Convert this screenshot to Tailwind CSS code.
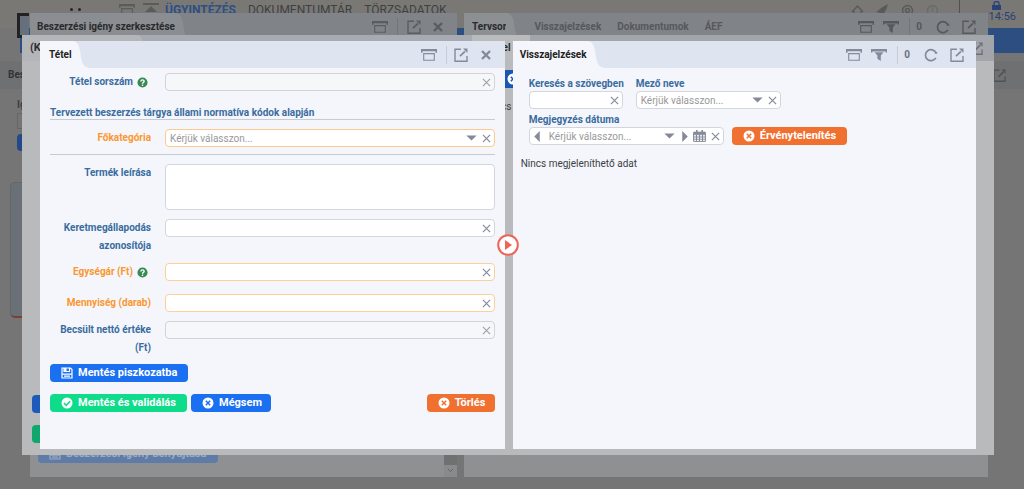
<!DOCTYPE html>
<html lang="hu">
<head>
<meta charset="utf-8">
<title>Tétel</title>
<script src="https://cdn.jsdelivr.net/npm/@tailwindcss/browser@4"></script>
</head>
<body class="relative h-screen overflow-hidden bg-[#757575] font-[Roboto,sans-serif] text-[10px] leading-[18px] text-[#3c3f44]">
<svg class="hidden">
  <symbol id="x" viewBox="0 0 10 10"><path d="M1 1l8 8M9 1l-8 8" fill="none" stroke="currentColor" stroke-width="1.3"/></symbol>
  <symbol id="xb" viewBox="0 0 10 10"><path d="M1 1l8 8M9 1l-8 8" fill="none" stroke="currentColor" stroke-width="2.4"/></symbol>
  <symbol id="box" viewBox="0 0 16 12"><path d="M0 0h16v3.800h-1.500v-1.500h-13v1.500H0z" fill="currentColor"/><path d="M2.700 4.600h10.600v6.700H2.700z" fill="none" stroke="currentColor" stroke-width="1.100"/></symbol>
  <symbol id="funnel" viewBox="0 0 16 12"><path d="M0 0h16v3.500h-1.400V2.500H1.400v1H0z" fill="currentColor"/><path d="M3.500 3.200h9L9.800 6.500V12L6.400 9.800V6.500z" fill="currentColor"/></symbol>
  <symbol id="ext" viewBox="0 0 14 14"><path d="M7 1.200H1v12h12V8" fill="none" stroke="currentColor" stroke-width="1.400"/><path d="M6 8.200L11 3.300" fill="none" stroke="currentColor" stroke-width="1.700"/><path d="M9 .5h4.500V5z" fill="currentColor"/></symbol>
  <symbol id="reload" viewBox="0 0 14 14"><path d="M11.800 9.800A5.500 5.500 0 1 1 12 5" fill="none" stroke="currentColor" stroke-width="1.700"/><path d="M10.400 5.800h2.800V3.200z" fill="currentColor"/></symbol>
  <symbol id="down" viewBox="0 0 12 7"><path d="M0 .5h12L6 6.500z" fill="currentColor"/></symbol>
  <symbol id="left" viewBox="0 0 6 12"><path d="M6 0v12L0 6z" fill="currentColor"/></symbol>
  <symbol id="right" viewBox="0 0 6 12"><path d="M0 0v12l6-6z" fill="currentColor"/></symbol>
  <symbol id="cal" viewBox="0 0 13 12"><path d="M.6 2.200h11.800v9.200H.6zM.6 4.700h11.800M.6 7h11.800M.6 9.200h11.800M3.500 4.700v6.700M6.500 4.700v6.700M9.500 4.700v6.700" fill="none" stroke="currentColor"/><path d="M1 2h11v2.200H1zM3 0h1.600v3H3zM8.400 0H10v3H8.400z" fill="currentColor"/></symbol>
  <symbol id="help" viewBox="0 0 12 12"><circle cx="6" cy="6" r="5.500" fill="#358a50"/><path d="M4.200 4.800c0-2.300 3.600-2.200 3.600-.2C7.800 5.900 6 5.800 6 7.300M6 8.300v1.400" fill="none" stroke="#fff" stroke-width="1.500"/></symbol>
  <symbol id="cx" viewBox="0 0 12 12"><circle cx="6" cy="6" r="5.500" fill="#fff"/><path d="M3.800 3.800l4.400 4.400M8.200 3.800L3.800 8.200" stroke="currentColor" stroke-width="1.500"/></symbol>
  <symbol id="ck" viewBox="0 0 12 12"><circle cx="6" cy="6" r="5.500" fill="#fff"/><path d="M3 6l2.200 2.300L9.200 4.200" fill="none" stroke="currentColor" stroke-width="1.600"/></symbol>
  <symbol id="save" viewBox="0 0 12 12"><path d="M1 1h8.500L11 2.500V11H1zM3 1v3.500h5.500V1M1 7.200h10M3 9.200h6" fill="none" stroke="currentColor" stroke-width="1.200"/><path d="M3.200 1h2.300v3H3.200z" fill="currentColor"/></symbol>
  <symbol id="tail" viewBox="0 0 18 27" preserveAspectRatio="none"><path d="M0 0C6 0 7.500 6 8.500 13C9.500 22 12 27 18 27H0z" fill="currentColor"/></symbol>
</svg>

<!-- application page -->
<div aria-hidden="true" class="absolute inset-0">
  <header class="flex h-7 items-start bg-[#797875] pl-[17px] text-[12px] leading-5 text-[#3f4042]">
    <div class="mt-[13px] h-[25px] w-3 border-y-[3px] border-l-[3px] border-[#222] bg-[#66707c]"></div>
    <div class="mt-2 ml-[41px] flex gap-[5px] text-[#262626]"><i class="size-[3px] rounded-full bg-current"></i><i class="size-[3px] rounded-full bg-current"></i></div>
    <svg class="mt-1 ml-[38px] h-3 w-4 text-[#5b5b5c]"><use href="#box"/></svg>
    <svg class="mt-[3px] ml-2 h-3 w-4 text-[#5b5b5c]" viewBox="0 0 16 12"><path d="M0 0h16v2H0zM8 3l6 6H2z" fill="currentColor"/></svg>
    <nav class="ml-[6px] flex gap-3"><a href="#" class="font-bold text-[#2c4f86]">ÜGYINTÉZÉS</a><a href="#">DOKUMENTUMTÁR</a><a href="#">TÖRZSADATOK</a></nav>
    <div class="mt-1 ml-auto flex gap-3 pr-5 text-[#59595a]">
      <svg class="size-[13px]" viewBox="0 0 13 13" fill="none" stroke="currentColor" stroke-width="1.300"><path d="M1 8l5.500-6L12 8M3 7v5h7V7"/></svg>
      <svg class="size-[13px]" viewBox="0 0 13 13"><path d="M12 0L5 4 3 6 0 8l3 .5L5 10l.5 2L8 9l2-3z" fill="currentColor"/></svg>
      <svg class="size-[13px]" viewBox="0 0 13 13" fill="none" stroke="currentColor" stroke-width="1.400"><circle cx="6.500" cy="6.500" r="5"/><circle cx="6.500" cy="6.500" r="2"/></svg>
      <svg class="size-[13px]" viewBox="0 0 13 13" fill="none" stroke="#6a6a6a" stroke-width="1.400"><circle cx="6.500" cy="6.500" r="5"/><path d="M6.500 3v5"/></svg>
    </div>
    <div class="flex w-[65px] flex-col items-end border-l border-[#505050] pr-2 text-[11px] leading-[14px] text-[#2a4277]">
      <svg class="mt-px mr-[15px] h-[9px] w-[9px]" viewBox="0 0 9 9"><path d="M0 4h9v5H0z" fill="currentColor"/><path d="M2 4V2.500a2.500 2 0 0 1 5 0V4" fill="none" stroke="currentColor" stroke-width="1.300"/></svg>
      <span>:14:56</span>
    </div>
  </header>
  <div class="ml-5 h-[25px] bg-[#2d4e80]"></div>
  <div class="mt-2 flex h-7 items-center justify-between bg-[#6f7072] pr-[18px] pl-2 font-bold text-[#333]"><span>Beszerzések</span><svg class="size-[13px] text-[#505254]"><use href="#ext"/></svg></div>
  <div class="pt-[7px] pl-[17px] font-bold">Igény<div class="-mt-px h-4 w-24 border border-[#666]"></div><div class="mt-[5px] h-[17px] w-24 rounded-[4px] bg-[#24488a]"></div></div>
  <div class="mt-[31px] ml-[10px] h-[136px] w-24 rounded-[5px] border border-b-2 border-[#62676c] border-b-[#7a4038] bg-[#6a7076]"></div>
</div>

<!-- first window -->
<div aria-hidden="true" class="absolute top-[13px] right-9 bottom-3 left-[30px] flex font-bold">
  <section class="mr-[7px] flex w-[427px] flex-col bg-[#8e9092]">
    <div class="flex h-[27px] items-center bg-[#808388] text-[#595c60]">
      <h2 class="flex h-full items-center bg-[#8a8d91] pl-[7px] text-[#292a2c]">Beszerzési igény szerkesztése</h2><svg class="h-[27px] w-[18px] text-[#8a8d91]"><use href="#tail"/></svg>
      <svg class="ml-auto h-3 w-4"><use href="#box"/></svg><i class="mx-[9px] h-[18px] w-px bg-[#727579]"></i><svg class="size-[14px]"><use href="#ext"/></svg><svg class="mr-[14px] ml-3 size-[10px]"><use href="#xb"/></svg>
    </div>
    <div class="mt-auto flex items-end justify-between"><button class="mb-[14px] ml-2 flex h-[18px] w-[180px] items-center gap-[5px] rounded-[4px] bg-[#5f7ba8] pl-[11px] text-[11px] text-[#9dabc2]"><svg class="size-3"><use href="#save"/></svg>Beszerzési igény benyújtása</button>
    <div class="flex h-[30px] w-[13px] flex-col justify-between bg-[#898a8b]"><i class="h-[18px] bg-[#6f7071]"></i><svg class="mx-[3px] mb-1 h-[5px] w-[7px]" viewBox="0 0 7 5"><path d="M1 1l2.500 2.500L6 1" fill="none" stroke="#666"/></svg></div></div>
  </section>
  <section class="flex-1 bg-[#8e9092]">
    <div class="flex h-[27px] items-center bg-[#808388] text-[#55585c]">
      <h2 class="flex h-full items-center bg-[#8d9093] pl-2 text-[#292a2c]">Tervsor</h2><svg class="h-[27px] w-[18px] text-[#8d9093]"><use href="#tail"/></svg>
      <span class="ml-[10px]">Visszajelzések</span><span class="ml-4">Dokumentumok</span><span class="ml-4">ÁEF</span>
      <svg class="ml-auto h-3 w-4"><use href="#box"/></svg><svg class="ml-[9px] h-3 w-4"><use href="#funnel"/></svg><i class="mr-[6px] ml-[10px] h-[18px] w-px bg-[#727579]"></i><span>0</span><svg class="ml-[14px] size-[14px]"><use href="#reload"/></svg><svg class="mr-3 ml-3 size-[14px]"><use href="#ext"/></svg>
    </div>
  </section>
</div>

<!-- second window -->
<div aria-hidden="true" class="absolute top-[35px] right-[30px] bottom-[34px] left-[22px] flex bg-[#b9babc] font-bold">
  <section class="mr-2 flex w-[450px] flex-col">
    <div class="flex h-[26px] bg-[#a7abb1]"><h2 class="w-[114px] bg-[#b3b5b8] pt-1 pl-2 text-[11px] text-[#2d2e30]">(K</h2><svg class="h-[26px] w-[18px] text-[#b3b5b8]"><use href="#tail"/></svg></div>
    <div class="mt-auto mb-3 ml-[10px] flex flex-col gap-3"><i class="h-[18px] w-20 rounded-[4px] bg-[#1d5ab9]"></i><i class="h-[18px] w-20 rounded-[4px] bg-[#10a76c]"></i></div>
  </section>
  <section class="flex-1">
    <div class="flex h-[26px] justify-between bg-[#a2a5aa]"><h2 class="w-[50px] bg-[#b9bbbd] pt-1 pl-2 text-[#2d2e30]">Tétel</h2><svg class="mt-[7px] mr-[11px] size-[13px] text-[#6c6f73]"><use href="#ext"/></svg></div>
    <div class="mt-[9px] ml-[6px] flex h-[18px] w-20 items-center bg-[#1c56b4] pl-[21px] text-[#1c56b4]"><svg class="size-3"><use href="#cx"/></svg></div>
    <p class="mt-[10px] pl-[6px] font-normal">Nincs</p>
  </section>
</div>

<!-- active window -->
<main class="absolute top-[41px] right-12 bottom-10 left-10 flex gap-2">
  <section class="flex flex-1 flex-col bg-[#f4f6fb]">
    <div class="flex h-[27px] items-center bg-[#dfe5f0] text-[#85899a]">
      <h2 class="flex h-full items-center bg-[#f4f6fb] pl-[9px] font-bold text-[#222]">Tétel</h2><svg class="h-[27px] w-[18px] text-[#f4f6fb]"><use href="#tail"/></svg>
      <button aria-label="Archívum" class="ml-auto"><svg class="h-3 w-4"><use href="#box"/></svg></button><i class="mr-[7px] ml-[9px] h-[18px] w-px bg-[#c6cbd6]"></i><button aria-label="Megnyitás"><svg class="size-[14px]"><use href="#ext"/></svg></button><button aria-label="Bezárás" class="mr-[14px] ml-[13px]"><svg class="size-[10px]"><use href="#xb"/></svg></button>
    </div>
    <form class="px-[10px] pt-[5px] font-bold text-[#3a6ca0]">
      <div class="grid grid-cols-[101px_1fr] gap-x-[14px]">
        <label for="f1" class="flex h-[18px] items-center justify-end gap-1 pr-[3px]">Tétel sorszám <svg class="size-[11px]"><use href="#help"/></svg></label>
        <div class="flex h-[18px] items-center rounded-[4px] border border-[#d0d3d8] bg-[#f6f7f8] text-[#a0a2a8]"><input id="f1" disabled class="h-full min-w-0 flex-1 px-1 outline-none"><button type="button" aria-label="Törlés" class="mr-[3px]"><svg class="size-[9px]"><use href="#x"/></svg></button></div>
      </div>
      <h3 class="mt-[13px] h-4 border-b border-[#c6cad3]">Tervezett beszerzés tárgya állami normatíva kódok alapján</h3>
      <div class="mt-[9px] grid grid-cols-[101px_1fr] gap-x-[14px]">
        <label for="f2" class="text-right text-[#fb972f]">Főkategória</label>
        <div class="flex h-[18px] items-center rounded-[4px] border border-[#fdc98c] bg-white text-[#85899a]"><select id="f2" class="h-full min-w-0 flex-1 appearance-none pl-1 font-normal text-[#999]"><option>Kérjük válasszon...</option></select><svg class="pointer-events-none mr-[5px] h-[6px] w-[11px]"><use href="#down"/></svg><button type="button" aria-label="Törlés" class="mr-[3px]"><svg class="size-[9px]"><use href="#x"/></svg></button></div>
      </div>
      <hr class="mt-[7px] border-[#c6cad3]">
      <div class="mt-[9px] grid grid-cols-[101px_1fr] gap-x-[14px]">
        <label for="f3" class="text-right">Termék leírása</label>
        <textarea id="f3" class="h-[46px] resize-none rounded-[4px] border border-[#d3d6de] bg-white px-1"></textarea>
      </div>
      <div class="mt-[9px] grid grid-cols-[101px_1fr] gap-x-[14px]">
        <label for="f4" class="text-right">Keretmegállapodás azonosítója</label>
        <div class="flex h-[18px] items-center rounded-[4px] border border-[#d3d6de] bg-white text-[#85899a]"><input id="f4" class="h-full min-w-0 flex-1 px-1 outline-none"><button type="button" aria-label="Törlés" class="mr-[3px]"><svg class="size-[9px]"><use href="#x"/></svg></button></div>
      </div>
      <div class="mt-[8px] grid grid-cols-[101px_1fr] gap-x-[14px] text-[#fb972f]">
        <label for="f5" class="flex h-[18px] items-center justify-end gap-1 pr-[3px]">Egységár (Ft) <svg class="size-[11px]"><use href="#help"/></svg></label>
        <div class="flex h-[18px] items-center rounded-[4px] border border-[#fdd09a] bg-white text-[#85899a]"><input id="f5" class="h-full min-w-0 flex-1 px-1 outline-none"><button type="button" aria-label="Törlés" class="mr-[3px]"><svg class="size-[9px]"><use href="#x"/></svg></button></div>
      </div>
      <div class="mt-[13px] grid grid-cols-[101px_1fr] gap-x-[14px] text-[#fb972f]">
        <label for="f6" class="text-right">Mennyiség (darab)</label>
        <div class="flex h-[18px] items-center rounded-[4px] border border-[#fdd09a] bg-white text-[#85899a]"><input id="f6" class="h-full min-w-0 flex-1 px-1 outline-none"><button type="button" aria-label="Törlés" class="mr-[3px]"><svg class="size-[9px]"><use href="#x"/></svg></button></div>
      </div>
      <div class="mt-[9px] grid grid-cols-[101px_1fr] gap-x-[14px]">
        <label for="f7" class="text-right">Becsült nettó értéke (Ft)</label>
        <div class="flex h-[18px] items-center rounded-[4px] border border-[#d0d3d8] bg-[#f6f7f8] text-[#a0a2a8]"><input id="f7" disabled class="h-full min-w-0 flex-1 px-1 outline-none"><button type="button" aria-label="Törlés" class="mr-[3px]"><svg class="size-[9px]"><use href="#x"/></svg></button></div>
      </div>
      <button type="button" class="mt-[7px] flex h-[18px] w-[138px] items-center gap-[5px] rounded-[4px] bg-[#1a70f0] pl-[11px] text-[11px] text-white"><svg class="size-3"><use href="#save"/></svg>Mentés piszkozatba</button>
      <div class="mt-[12px] flex gap-1 text-[11px]">
        <button type="button" class="flex h-[18px] w-[137px] items-center gap-[5px] rounded-[4px] bg-[#0edc8b] pl-[11px] text-[#0edc8b]"><svg class="size-3"><use href="#ck"/></svg><span class="text-white">Mentés és validálás</span></button>
        <button type="button" class="flex h-[18px] w-20 items-center gap-[5px] rounded-[4px] bg-[#1a70f0] pl-[11px] text-[#1a70f0]"><svg class="size-3"><use href="#cx"/></svg><span class="text-white">Mégsem</span></button>
        <button type="button" class="ml-auto flex h-[18px] w-[68px] items-center gap-[5px] rounded-[4px] bg-[#f07030] pl-[11px] text-[#f07030]"><svg class="size-3"><use href="#cx"/></svg><span class="text-white">Törlés</span></button>
      </div>
    </form>
  </section>

  <section class="flex w-[49.5%] flex-col bg-[#f4f6fb]">
    <div class="flex h-[27px] items-center bg-[#dfe5f0] text-[#85899a]">
      <h2 class="flex h-full items-center bg-[#f4f6fb] pl-[7px] font-bold text-[#222]">Visszajelzések</h2><svg class="h-[27px] w-[18px] text-[#f4f6fb]"><use href="#tail"/></svg>
      <button aria-label="Archívum" class="ml-auto"><svg class="h-3 w-4"><use href="#box"/></svg></button><button aria-label="Szűrő" class="ml-[9px]"><svg class="h-3 w-4"><use href="#funnel"/></svg></button><i class="mr-[6px] ml-[10px] h-[18px] w-px bg-[#c6cbd6]"></i><span class="font-bold text-[#6d7180]">0</span><button aria-label="Frissítés" class="ml-[14px]"><svg class="size-[14px]"><use href="#reload"/></svg></button><button aria-label="Megnyitás" class="mr-3 ml-3"><svg class="size-[14px]"><use href="#ext"/></svg></button>
    </div>
    <form class="pt-2 pl-4 font-bold text-[#3a6ca0]">
      <div class="flex gap-[13px]">
        <div class="w-[94px]"><label for="g1" class="block h-[15px] leading-4 whitespace-nowrap">Keresés a szövegben</label>
          <div class="flex h-[18px] items-center rounded-[4px] border border-[#d3d6de] bg-white text-[#85899a]"><input id="g1" class="h-full min-w-0 flex-1 px-1 outline-none"><button type="button" aria-label="Törlés" class="mr-[3px]"><svg class="size-[9px]"><use href="#x"/></svg></button></div></div>
        <div class="w-[145px]"><label for="g2" class="block h-[15px] leading-4">Mező neve</label>
          <div class="flex h-[18px] items-center rounded-[4px] border border-[#d3d6de] bg-white text-[#85899a]"><select id="g2" class="h-full min-w-0 flex-1 appearance-none pl-1 font-normal text-[#999]"><option>Kérjük válasszon...</option></select><svg class="pointer-events-none mr-[5px] h-[6px] w-[11px]"><use href="#down"/></svg><button type="button" aria-label="Törlés" class="mr-[3px]"><svg class="size-[9px]"><use href="#x"/></svg></button></div></div>
      </div>
      <div class="mt-[3px] flex items-end gap-2">
        <div class="w-[195px]"><label for="g3" class="block h-[15px] leading-4">Megjegyzés dátuma</label>
          <div class="flex h-[18px] items-center rounded-[4px] border border-[#d3d6de] bg-white text-[#85899a]"><button type="button" aria-label="Előző" class="ml-1"><svg class="h-[11px] w-[6px]"><use href="#left"/></svg></button><select id="g3" class="ml-[5px] h-full min-w-0 flex-1 appearance-none pl-1 font-normal text-[#999]"><option>Kérjük válasszon...</option></select><svg class="pointer-events-none mr-[7px] h-[6px] w-[11px]"><use href="#down"/></svg><button type="button" aria-label="Következő" class="mr-[5px]"><svg class="h-[11px] w-[6px]"><use href="#right"/></svg></button><button type="button" aria-label="Naptár" class="mr-[5px]"><svg class="h-3 w-[13px]"><use href="#cal"/></svg></button><button type="button" aria-label="Törlés" class="mr-[3px]"><svg class="size-[9px]"><use href="#x"/></svg></button></div></div>
        <button type="button" class="flex h-[18px] w-[115px] items-center gap-[5px] rounded-[4px] bg-[#f07030] pl-[11px] text-[11px] text-[#f07030]"><svg class="size-3"><use href="#cx"/></svg><span class="text-white">Érvénytelenítés</span></button>
      </div>
    </form>
    <p class="mt-[10px] pl-2">Nincs megjeleníthető adat</p>
  </section>
  <button aria-label="Panel nyitása" class="absolute top-[193px] left-1/2 -translate-x-1/2"><svg class="size-[22px]" viewBox="0 0 22 22"><circle cx="11" cy="11" r="9.800" fill="#fff" stroke="#ec6557" stroke-width="2"/><path d="M8 6v10l7-5z" fill="#ec6557"/></svg></button>
</main>
</body>
</html>
